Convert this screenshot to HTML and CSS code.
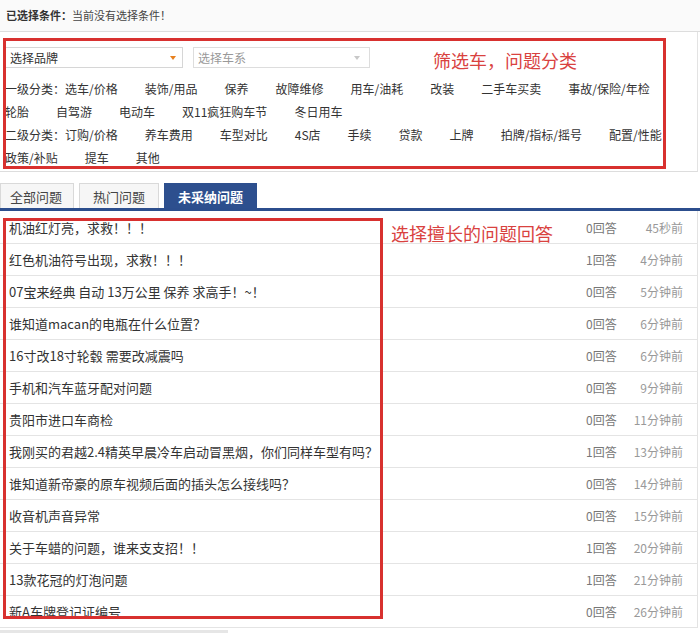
FILE: index.html
```html
<!DOCTYPE html>
<html lang="zh-CN">

<head>
  <meta charset="UTF-8" />
  <title>问答 - 未采纳问题</title>
  <link rel="stylesheet" href="styles.css">
</head>

<body>

  <div class="cond">
    <b>已选择条件：</b>当前没有选择条件！
  </div>

  <div class="filter">
    <div class="selects">
      <div class="select">
        <span>选择品牌</span>
        <i class="arrow"></i>
      </div>
      <div class="select off">
        <span>选择车系</span>
        <i class="arrow"></i>
      </div>
      <span class="note">筛选车，问题分类</span>
    </div>

    <div class="cats">
      <span class="lbl">一级分类：</span>
      <a href="#">选车/价格</a>
      <a href="#">装饰/用品</a>
      <a href="#">保养</a>
      <a href="#">故障维修</a>
      <a href="#">用车/油耗</a>
      <a href="#">改装</a>
      <a href="#">二手车买卖</a>
      <a href="#">事故/保险/年检</a>
      <a href="#">轮胎</a>
      <a href="#">自驾游</a>
      <a href="#">电动车</a>
      <a href="#">双11疯狂购车节</a>
      <a href="#">冬日用车</a>
    </div>
    <div class="cats">
      <span class="lbl">二级分类：</span>
      <a href="#">订购/价格</a>
      <a href="#">养车费用</a>
      <a href="#">车型对比</a>
      <a href="#">4S店</a>
      <a href="#">手续</a>
      <a href="#">贷款</a>
      <a href="#">上牌</a>
      <a href="#">拍牌/指标/摇号</a>
      <a href="#">配置/性能</a>
      <a href="#">政策/补贴</a>
      <a href="#">提车</a>
      <a href="#">其他</a>
    </div>

    <div class="mark mark-filter"></div>
  </div>

  <div class="tabs">
    <a href="#" class="tab">全部问题</a>
    <a href="#" class="tab">热门问题</a>
    <a href="#" class="tab active">未采纳问题</a>
  </div>

  <div class="list">
    <div class="row"><a href="#" class="title">机油红灯亮，求救！！！</a><span class="count">0回答</span><span class="time">45秒前</span></div>
    <div class="row"><a href="#" class="title">红色机油符号出现，求救！！！</a><span class="count">1回答</span><span class="time">4分钟前</span></div>
    <div class="row"><a href="#" class="title">07宝来经典 自动 13万公里 保养 求高手！~！</a><span class="count">0回答</span><span class="time">5分钟前</span></div>
    <div class="row"><a href="#" class="title">谁知道macan的电瓶在什么位置？</a><span class="count">0回答</span><span class="time">6分钟前</span></div>
    <div class="row"><a href="#" class="title">16寸改18寸轮毂 需要改减震吗</a><span class="count">0回答</span><span class="time">6分钟前</span></div>
    <div class="row"><a href="#" class="title">手机和汽车蓝牙配对问题</a><span class="count">0回答</span><span class="time">9分钟前</span></div>
    <div class="row"><a href="#" class="title">贵阳市进口车商检</a><span class="count">0回答</span><span class="time">11分钟前</span></div>
    <div class="row"><a href="#" class="title">我刚买的君越2.4精英早晨冷车启动冒黑烟，你们同样车型有吗？</a><span class="count">1回答</span><span class="time">13分钟前</span></div>
    <div class="row"><a href="#" class="title">谁知道新帝豪的原车视频后面的插头怎么接线吗？</a><span class="count">0回答</span><span class="time">14分钟前</span></div>
    <div class="row"><a href="#" class="title">收音机声音异常</a><span class="count">0回答</span><span class="time">15分钟前</span></div>
    <div class="row"><a href="#" class="title">关于车蜡的问题，谁来支支招！！</a><span class="count">1回答</span><span class="time">20分钟前</span></div>
    <div class="row"><a href="#" class="title">13款花冠的灯泡问题</a><span class="count">1回答</span><span class="time">21分钟前</span></div>
    <div class="row"><a href="#" class="title">新A车牌登记证编号</a><span class="count">0回答</span><span class="time">26分钟前</span></div>

    <div class="mark mark-list"></div>
    <span class="note note-list">选择擅长的问题回答</span>
  </div>

  <div class="scroll-bar"></div>

</body>

</html>
```

FILE: styles.css
```css
body {
  margin: 0;
  font-family: "Noto Sans CJK SC", "Liberation Sans", sans-serif;
  font-size: 12px;
  color: #333;
  background: #fff;
}

a {
  color: #333;
  text-decoration: none;
}

.cond {
  height: 31px;
  line-height: 30px;
  padding-left: 6px;
  font-size: 11px;
  color: #444;
  background: #fafafa;
  border-bottom: 1px solid #ddd;
}

.cond b {
  color: #333;
}

/* filter panel */
.filter {
  position: relative;
  height: 140px;
  box-sizing: border-box;
  margin-right: 2px;
  padding: 15px 0 2px 5px;
  border-right: 1px solid #e3e3e3;
  border-bottom: 1px solid #ddd;
}

.selects {
  display: flex;
  align-items: center;
  height: 21px;
  margin-bottom: 9px;
}

.select {
  display: flex;
  align-items: center;
  justify-content: space-between;
  width: 178px;
  height: 21px;
  box-sizing: border-box;
  padding: 0 4px 0 4px;
  border: 1px solid #d6d6d6;
  background: #fff;
  color: #333;
}

.select .arrow {
  width: 0;
  height: 0;
  margin-right: 2px;
  border-left: 3px solid transparent;
  border-right: 3px solid transparent;
  border-top: 4px solid #e8801e;
}

.select.off {
  width: 177px;
  margin-left: 10px;
  color: #999;
  border-color: #ddd;
}

.select.off .arrow {
  margin-right: 5px;
  border-top-color: #c8c8c8;
}

.note {
  font-size: 18px;
  color: #d9423f;
  line-height: 24px;
}

.selects .note {
  margin-left: 63px;
  margin-top: 4px;
}

.cats {
  display: flex;
  flex-wrap: wrap;
  line-height: 23px;
}

.cats a {
  margin-right: 27px;
}

.mark {
  position: absolute;
  box-sizing: border-box;
  border: 3px solid #d8312f;
  pointer-events: none;
}

.mark-filter {
  left: 3px;
  top: 6px;
  width: 663px;
  height: 131px;
}

/* tabs */
.tabs {
  display: flex;
  gap: 5px;
  margin-top: 11px;
  border-bottom: 3px solid #2c4e8d;
}

.tab {
  height: 25px;
  line-height: 25px;
  box-sizing: border-box;
  padding: 0 13px;
  font-size: 13px;
  color: #444;
  background: #f6f6f6;
  border: 1px solid #d9d9d9;
  border-bottom: none;
}

.tab:first-child {
  padding-left: 9px;
  padding-right: 11px;
}

.tab.active {
  color: #fff;
  font-weight: bold;
  background: #2d4f8e;
  border-color: #2d4f8e;
}

/* question list */
.list {
  position: relative;
  margin-right: 2px;
  padding-top: 1px;
  border-right: 1px solid #e3e3e3;
}

.row {
  display: flex;
  align-items: center;
  height: 32px;
  box-sizing: border-box;
  padding: 0 14px 0 9px;
  border-bottom: 1px solid #e4e4e4;
}

.row .title {
  flex: 1;
  font-size: 13px;
  color: #333;
  white-space: nowrap;
}

.row .count {
  width: 41px;
  color: #777;
}

.row .time {
  width: 56px;
  text-align: right;
  color: #999;
}

.mark-list {
  left: 3px;
  top: 7px;
  width: 380px;
  height: 401px;
}

.note-list {
  position: absolute;
  left: 391px;
  top: 10px;
}

.scroll-bar {
  width: 228px;
  height: 5px;
  margin-top: 2px;
  background: #e6e6e6;
}
```
